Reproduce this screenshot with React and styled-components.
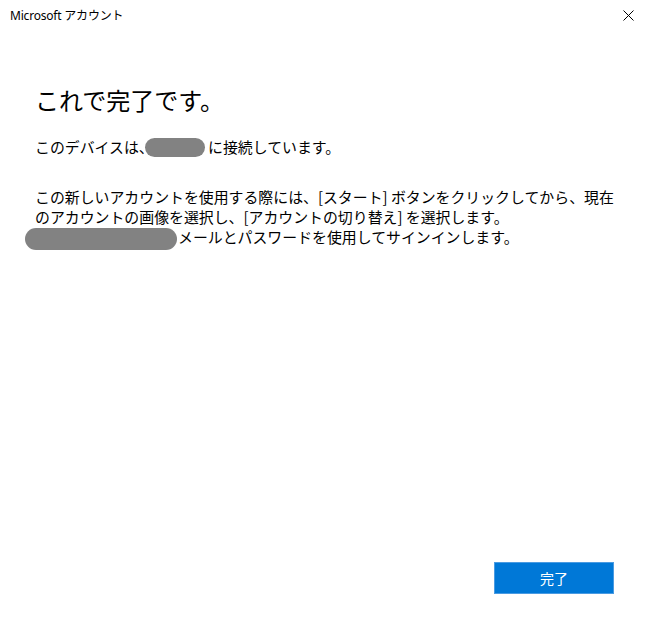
import React from "react";
import styled, { createGlobalStyle } from "styled-components";

const Global = createGlobalStyle`
  html, body { margin: 0; padding: 0; background: #ffffff; }
  body { font-family: "Noto Sans", "Noto Sans CJK JP", sans-serif; }
`;

const Window = styled.div`
  width: 650px;
  height: 624px;
  background: #ffffff;
  display: flex;
  flex-direction: column;
  box-sizing: border-box;
  font-family: "Noto Sans CJK JP", "Noto Sans", sans-serif;
  color: #000000;
`;

const TitleBar = styled.div`
  height: 30px;
  display: flex;
  align-items: center;
  justify-content: space-between;
  padding: 0 14px 0 10px;
  flex-shrink: 0;
`;

const TitleText = styled.span`
  font-family: "Noto Sans", "Noto Sans CJK JP", sans-serif;
  font-size: 12px;
  color: #000000;
  letter-spacing: -0.2px;
`;

const CloseButton = styled.button`
  border: none;
  background: transparent;
  padding: 0;
  width: 16px;
  height: 16px;
  display: flex;
  align-items: center;
  justify-content: center;
  cursor: pointer;
`;

const Content = styled.main`
  flex: 1;
  padding: 52px 35px 0 35px;
  display: flex;
  flex-direction: column;
`;

const Heading = styled.h1`
  margin: 0;
  font-size: 24px;
  font-weight: 400;
  line-height: 36px;
  color: #000000;
`;

const Paragraph = styled.p`
  margin: ${(p) => p.$top}px 0 0 0;
  font-size: 14.9px;
  line-height: 20px;
  white-space: nowrap;
  color: #000000;
`;

const Redacted = styled.span`
  display: inline-block;
  vertical-align: middle;
  width: ${(p) => p.$w}px;
  height: ${(p) => p.$h}px;
  margin-left: ${(p) => p.$ml}px;
  margin-right: ${(p) => p.$mr}px;
  background: #828282;
  border-radius: ${(p) => p.$h / 2}px;
  position: relative;
  top: ${(p) => p.$dy}px;
`;

const Footer = styled.footer`
  display: flex;
  justify-content: flex-end;
  padding: 0 36px 30px 0;
`;

const PrimaryButton = styled.button`
  width: 120px;
  height: 32px;
  box-sizing: border-box;
  background: #0078d7;
  border: 1px solid #4a9be2;
  color: #ffffff;
  font-family: "Noto Sans CJK JP", sans-serif;
  font-size: 14px;
  cursor: pointer;
  padding: 0;
`;

export default function App() {
  return (
    <>
      <Global />
      <Window>
        <TitleBar>
          <TitleText>Microsoft アカウント</TitleText>
          <CloseButton aria-label="閉じる">
            <svg width="11" height="11" viewBox="0 0 11 11">
              <path d="M0.5 0.5 L10.5 10.5 M10.5 0.5 L0.5 10.5" stroke="#000" strokeWidth="1" fill="none" />
            </svg>
          </CloseButton>
        </TitleBar>
        <Content>
          <Heading>これで完了です。</Heading>
          <Paragraph $top={19}>
            このデバイスは、
            <Redacted $w={60} $h={19} $ml={-9} $mr={0} $dy={-1} /> に接続しています。
          </Paragraph>
          <Paragraph $top={29}>
            この新しいアカウントを使用する際には、[スタート] ボタンをクリックしてから、現在
            <br />
            のアカウントの画像を選択し、[アカウントの切り替え] を選択します。
            <br />
            <Redacted $w={152} $h={22} $ml={-10} $mr={1} $dy={0} />
            メールとパスワードを使用してサインインします。
          </Paragraph>
        </Content>
        <Footer>
          <PrimaryButton>完了</PrimaryButton>
        </Footer>
      </Window>
    </>
  );
}
